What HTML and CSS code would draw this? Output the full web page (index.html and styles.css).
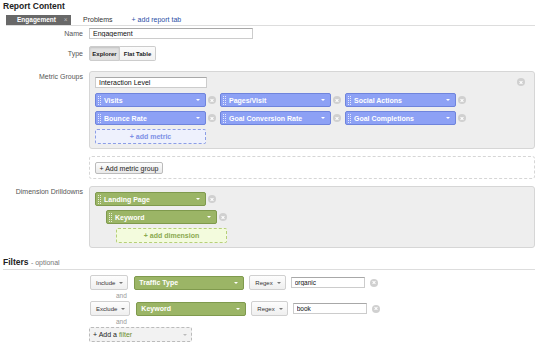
FILE: index.html
```html
<!DOCTYPE html>
<html lang="en">
  <head>
    <meta charset="UTF-8" />
    <meta name="viewport" content="width=device-width, initial-scale=1.0" />
    <title>Report Content</title>
    <link rel="stylesheet" href="styles.css">
  </head>
  <body>
    <main class="page">
      <h1 class="title">Report Content</h1>
      <div class="tabs">
        <span class="tab active">Engagement <span class="tabClose">×</span></span>
        <span class="tab">Problems</span>
        <a class="tab addTab" href="#">+ add report tab</a>
      </div>

      <div class="field nameField">
        <label for="name">Name</label>
        <div><input type="text" id="name" class="textInput nameInput" value="Engagement" /></div>
      </div>

      <div class="field typeField">
        <label>Type</label>
        <div class="toggle">
          <button class="pressed">Explorer</button>
          <button>Flat Table</button>
        </div>
      </div>

      <div class="field metricField">
        <label class="topLabel">Metric Groups</label>
        <div class="groupBox">
          <div class="groupHead">
            <input type="text" class="textInput groupName" value="Interaction Level" />
            <span class="remove"></span>
          </div>
          <div class="metricGrid">
            <div class="cell"><span class="pill blue"><span class="grip"></span>Visits<span class="caret"></span></span><span class="remove"></span></div>
            <div class="cell"><span class="pill blue"><span class="grip"></span>Pages/Visit<span class="caret"></span></span><span class="remove"></span></div>
            <div class="cell"><span class="pill blue"><span class="grip"></span>Social Actions<span class="caret"></span></span><span class="remove"></span></div>
            <div class="cell"><span class="pill blue"><span class="grip"></span>Bounce Rate<span class="caret"></span></span><span class="remove"></span></div>
            <div class="cell"><span class="pill blue"><span class="grip"></span>Goal Conversion Rate<span class="caret"></span></span><span class="remove"></span></div>
            <div class="cell"><span class="pill blue"><span class="grip"></span>Goal Completions<span class="caret"></span></span><span class="remove"></span></div>
            <div class="cell"><span class="addSlot addMetric">+ add metric</span></div>
          </div>
        </div>
      </div>

      <div class="field addGroupField">
        <span></span>
        <div class="dashedBox">
          <button class="plainBtn">+ Add metric group</button>
        </div>
      </div>

      <div class="field dimField">
        <label class="topLabel">Dimension Drilldowns</label>
        <div class="groupBox drill">
          <div class="cell"><span class="pill green"><span class="grip"></span>Landing Page<span class="caret"></span></span><span class="remove"></span></div>
          <div class="cell level1"><span class="pill green"><span class="grip"></span>Keyword<span class="caret"></span></span><span class="remove"></span></div>
          <span class="addSlot addDim level2">+ add dimension</span>
        </div>
      </div>

      <h2 class="filtersHead">Filters <span>- optional</span></h2>

      <div class="filters">
        <div class="filterRow">
          <button class="selectBtn">Include <span class="smallCaret"></span></button>
          <span class="pill green filterPill">Traffic Type<span class="caret"></span></span>
          <button class="selectBtn">Regex <span class="smallCaret"></span></button>
          <input type="text" class="textInput filterInput" value="organic" />
          <span class="remove"></span>
        </div>
        <div class="and">and</div>
        <div class="filterRow">
          <button class="selectBtn">Exclude <span class="smallCaret"></span></button>
          <span class="pill green filterPill">Keyword<span class="caret"></span></span>
          <button class="selectBtn">Regex <span class="smallCaret"></span></button>
          <input type="text" class="textInput filterInput" value="book" />
          <span class="remove"></span>
        </div>
        <div class="and">and</div>
        <div class="addFilter">+ Add a&nbsp;<span class="green">filter</span><span class="smallCaret"></span></div>
      </div>
    </main>
  </body>
</html>
```

FILE: styles.css
```css
* {
  margin: 0;
  padding: 0;
  box-sizing: border-box;
  font-family: 'Liberation Sans', Arial, sans-serif;
}

body {
  background-color: #fff;
  color: #333;
  font-size: 7px;
}

.page {
  width: 540px;
  padding: 1px 5px 0 3px;
}

.title {
  font-size: 8.5px;
  line-height: 10px;
  color: #222;
}

/* tabs */
.tabs {
  display: flex;
  align-items: flex-end;
  height: 15px;
  margin-left: 3px;
  border-bottom: 1px solid #ddd;
}

.tab {
  height: 10px;
  line-height: 10px;
  margin-right: 12px;
  color: #333;
}

.tab.active {
  width: 65px;
  padding-left: 11px;
  background-color: #686868;
  color: #fff;
  font-weight: bold;
  font-size: 6.5px;
  margin-right: 12px;
}

.tabClose {
  margin-left: 6px;
  color: #bbb;
  font-weight: normal;
}

.addTab {
  margin-left: 7px;
  color: #2a4ea6;
  text-decoration: none;
}

/* form rows */
.field {
  display: grid;
  grid-template-columns: 80px 1fr;
  column-gap: 6px;
  align-items: center;
}

label {
  text-align: right;
  color: #555;
  line-height: 8px;
}

.topLabel {
  align-self: start;
  padding-top: 2px;
}

.nameField { margin-top: 2px; }
.typeField { margin-top: 7px; }
.metricField { margin-top: 10px; }
.addGroupField { margin-top: 7px; }
.dimField { margin-top: 7px; }

.textInput {
  height: 11px;
  padding: 0 3px;
  border: 1px solid #ccc;
  border-top-color: #a8a8a8;
  background: #fff;
  font-size: 7px;
  color: #111;
  outline: none;
}

.nameInput {
  width: 164px;
  display: block;
}

.toggle {
  display: flex;
}

.toggle button {
  height: 15px;
  padding: 0;
  border: 1px solid #ccc;
  background: linear-gradient(#fbfbfb, #f1f1f1);
  font-size: 6px;
  font-weight: bold;
  color: #222;
  white-space: nowrap;
  &:first-child {
    width: 31px;
    border-radius: 2px 0 0 2px;
  }
  &:last-child {
    width: 36px;
    border-left: none;
    border-radius: 0 2px 2px 0;
  }
  &.pressed {
    background: #e2e2e2;
    box-shadow: inset 0 1px 2px rgba(0, 0, 0, 0.15);
  }
}

/* grey group boxes */
.groupBox {
  border: 1px solid #d6d6d6;
  border-radius: 3px;
  background-color: #eee;
  padding: 5px 9px 4px 5px;
}

.groupHead {
  display: flex;
  justify-content: space-between;
  align-items: flex-start;
}

.groupHead .remove {
  margin-top: 1px;
}

.groupName {
  width: 112px;
}

.metricGrid {
  display: grid;
  grid-template-columns: repeat(3, 121px);
  column-gap: 4px;
  row-gap: 4px;
  margin-top: 5px;
}

.cell {
  display: flex;
  align-items: center;
  gap: 2px;
}

.pill {
  display: flex;
  align-items: center;
  width: 111px;
  height: 14px;
  padding: 0 5px 0 2px;
  border: 1px solid;
  border-radius: 2px;
  color: #fff;
  font-weight: bold;
  white-space: nowrap;
}

.pill.blue {
  background-color: #8da1f5;
  border-color: #6f84dc;
}

.pill.green {
  background-color: #9bb566;
  border-color: #7f9a4d;
}

.grip {
  width: 3px;
  height: 9px;
  margin-right: 3px;
  border-left: 1px dotted rgba(255, 255, 255, 0.75);
  border-right: 1px dotted rgba(255, 255, 255, 0.75);
}

.caret {
  margin-left: auto;
  border-left: 2px solid transparent;
  border-right: 2px solid transparent;
  border-top: 2px solid #fff;
}

.remove {
  position: relative;
  flex: none;
  width: 8px;
  height: 8px;
  border-radius: 50%;
  background-color: #d0d0d0;
  &::before,
  &::after {
    content: "";
    position: absolute;
    left: 2px;
    top: 3.5px;
    width: 4px;
    height: 1px;
    background-color: #fff;
    transform: rotate(45deg);
  }
  &::after {
    transform: rotate(-45deg);
  }
}

.addSlot {
  display: flex;
  align-items: center;
  justify-content: center;
  width: 111px;
  height: 15px;
  border: 1px dashed;
  border-radius: 2px;
  font-weight: bold;
}

.addMetric {
  background-color: #eef1fd;
  border-color: #8c9ee6;
  color: #7d90e6;
}

.dashedBox {
  border: 1px dashed #d6d6d6;
  border-radius: 3px;
  padding: 5px 5px 4px;
}

.plainBtn {
  height: 12px;
  width: 68px;
  border: 1px solid #bbb;
  border-radius: 2px;
  background: linear-gradient(#fdfdfd, #e9e9e9);
  font-size: 7px;
  color: #222;
  white-space: nowrap;
}

.drill {
  display: flex;
  flex-direction: column;
  align-items: flex-start;
  gap: 4px;
}

.level1 { margin-left: 11px; }
.level2 { margin-left: 21px; }

.addDim {
  background-color: #f3fbdd;
  border-color: #b6cf78;
  color: #8aa94f;
}

/* filters */
.filtersHead {
  margin-top: 10px;
  padding-bottom: 2px;
  border-bottom: 1px solid #ddd;
  font-size: 8.5px;
  line-height: 9px;
  color: #222;
  & span {
    font-size: 7px;
    font-weight: normal;
    color: #777;
  }
}

.filters {
  margin: 5px 0 0 86px;
}

.filterRow {
  display: flex;
  align-items: center;
  gap: 5px;
  height: 15px;
  padding-left: 1px;
}

.selectBtn {
  display: flex;
  align-items: center;
  gap: 4px;
  height: 15px;
  padding: 0 4px 0 5px;
  border: 1px solid #d0d0d0;
  border-radius: 2px;
  background: linear-gradient(#fdfdfd, #efefef);
  font-size: 6px;
  color: #333;
}

.smallCaret {
  border-left: 2px solid transparent;
  border-right: 2px solid transparent;
  border-top: 2px solid #777;
}

.filterPill {
  width: 110px;
  padding-left: 4px;
  margin-left: 1px;
}

.filterInput {
  width: 74px;
  font-size: 6.5px;
}

.and {
  height: 11px;
  line-height: 11px;
  padding-left: 27px;
  color: #999;
  font-size: 6.5px;
}

.addFilter {
  display: flex;
  align-items: center;
  width: 103px;
  height: 15px;
  padding: 0 4px 0 3px;
  border: 1px dashed #bbb;
  border-radius: 2px;
  background-color: #f2f2f2;
  color: #222;
  & .green {
    color: #6b8f2c;
  }
  & .smallCaret {
    margin-left: auto;
    border-top-color: #bbb;
  }
}
```
